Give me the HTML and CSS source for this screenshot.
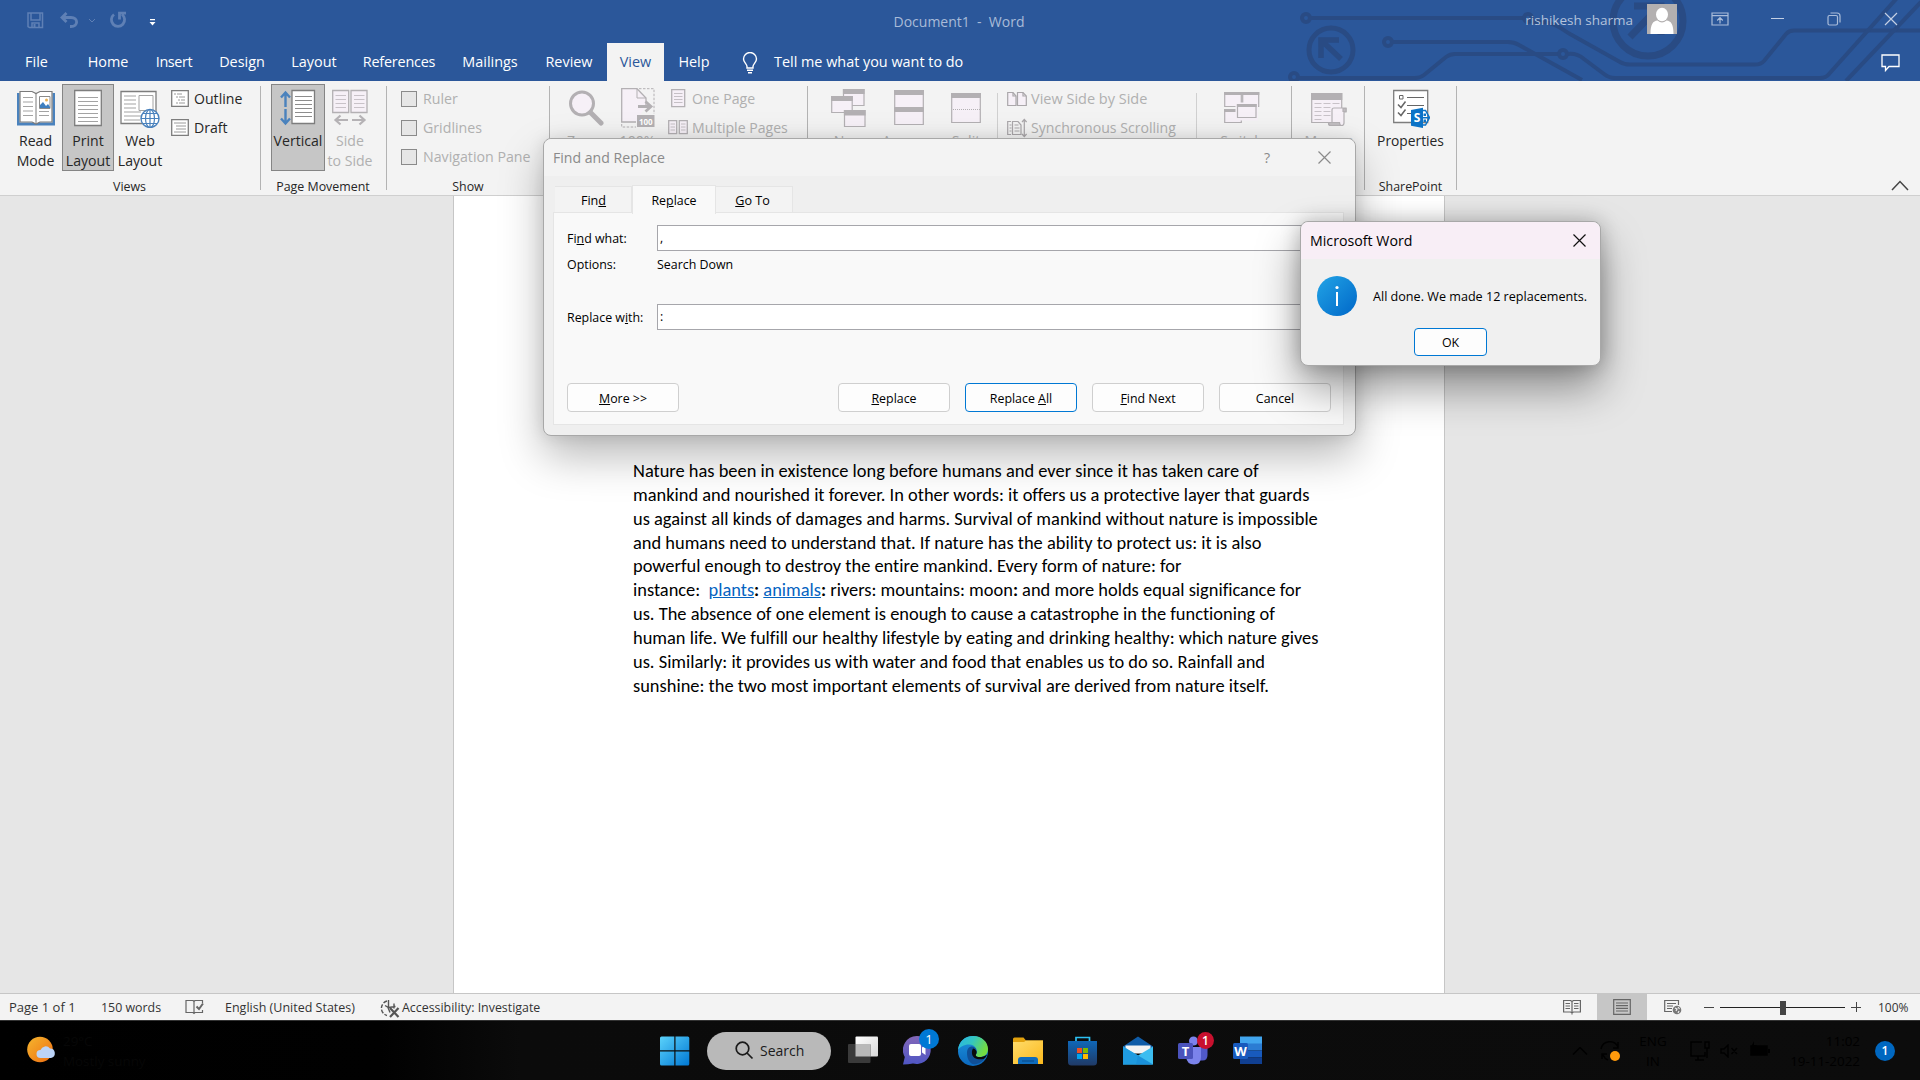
FILE: index.html
```html
<!DOCTYPE html>
<html lang="en">
<head>
<meta charset="utf-8">
<title>Document1 - Word</title>
<link rel="stylesheet" href="styles.css">
</head>
<body>
<header class="top">
  <svg class="circuit" width="640" height="81" viewBox="1280 0 640 81" fill="none" stroke="#294b84" stroke-width="4">
    <circle cx="1306" cy="18" r="4"/><path d="M1311 18H1523"/><circle cx="1528" cy="18" r="4"/>
    <path d="M1532 22C1552 20 1560 28 1570 34L1620 62Q1624 64.500 1630 64.500H1755Q1761 64.500 1764 61L1786 34Q1789 30.500 1794 30.500H1920"/>
    <circle cx="1388" cy="42" r="4"/><path d="M1393 42H1508Q1514 42 1519 45L1582 80"/>
    <circle cx="1294" cy="77" r="4"/><path d="M1299 78H1415Q1420 78 1424 75L1446 57Q1450 54 1455 54H1558"/>
    <circle cx="1563" cy="54" r="4"/><path d="M1568 54Q1577 53 1584 59L1604 74Q1609 78 1615 78H1820Q1826 78 1829 74L1897 -2"/>
    <path d="M1846 81L1921 2"/>
    <circle cx="1331" cy="50" r="22" stroke-width="5"/>
    <path d="M1341 59L1322 41M1321 58V40H1339" stroke-width="5.500"/>
    <circle cx="1648" cy="21" r="35" stroke-width="7"/>
    <path d="M1630 37L1658 8M1634 6H1661V35" stroke-width="7"/>
  </svg>
  <div class="titlebar">
    <div class="quick">
      <svg width="17" height="17" viewBox="0 0 17 17" fill="none" stroke="#5f80b5" stroke-width="1.500"><path d="M1 1h14.500v14.500H2.500L1 14.500zM4 1v7h9V1M5 15.500v-4.500h7v4.500"/><path d="M7.500 12v3.500" stroke-width="2"/></svg>
      <svg class="undo" width="19" height="17" viewBox="0 0 19 17" fill="none" stroke="#5f80b5" stroke-width="2.800"><path d="M6.500 1L2 5.500L6.500 10M2 5.500H11C18.500 5.500 18.500 14.500 11 14.500H10"/></svg>
      <svg class="more" width="8" height="6" viewBox="0 0 8 6" fill="none" stroke="#5f80b5"><path d="M1 1L4 4L7 1"/></svg>
      <svg class="redo" width="18" height="18" viewBox="0 0 18 18" fill="none" stroke="#5f80b5" stroke-width="2.800"><path d="M5 3.500A6.600 6.600 0 1 0 13 3.500M10.500 8.500V2.200H17"/></svg>
      <svg class="custom" width="7" height="7" viewBox="0 0 7 7" fill="#fff"><path d="M1 0h5v1.300H1zM0.500 3h6L3.500 6.500z"/></svg>
    </div>
    <div class="doc-title">Document1&nbsp; -&nbsp; Word</div>
    <div class="account">
      <span class="user">rishikesh sharma</span>
      <svg class="avatar" width="30" height="30" viewBox="0 0 30 30"><path fill="#b3b0b0" d="M0 0h30v30H0z"/><ellipse cx="15" cy="10.500" rx="6" ry="6.800" fill="#fff"/><path fill="#fff" d="M3.500 30C3.500 20 6 17 10.500 16.500Q15 20.500 19.500 16.500C24 17 26.500 20 26.500 30z"/></svg>
      <svg class="wi ropt" width="18" height="14" viewBox="0 0 18 14" fill="none" stroke="#aabcd9" stroke-width="1.200"><path d="M1 1h16v12H1zM1 3.700h16M9 11.500V6M6.200 8.500L9 5.700L11.800 8.500"/></svg>
      <svg class="wi min" width="13" height="14" viewBox="0 0 13 14" stroke="#c4d0e4"><path d="M0 6.500h13"/></svg>
      <svg class="wi rest" width="14" height="14" viewBox="0 0 14 14" fill="none" stroke="#aabcd9" stroke-width="1.200"><rect x="1" y="3.500" width="9.500" height="9.500" rx="1.500"/><path d="M3.500 1h6.500a3 3 0 0 1 3 3v6.500"/></svg>
      <svg class="wi cls" width="14" height="14" viewBox="0 0 14 14" stroke="#c4d0e4" stroke-width="1.200"><path d="M1 1l12 12M13 1L1 13"/></svg>
    </div>
  </div>
  <nav class="tabs">
    <span class="t-file">File</span><span class="t-home">Home</span><span class="t-ins">Insert</span><span class="t-des">Design</span><span class="t-lay">Layout</span><span class="t-ref">References</span><span class="t-mail">Mailings</span><span class="t-rev">Review</span><span class="t-view">View</span><span class="t-help">Help</span>
    <svg class="bulb" width="16" height="22" viewBox="0 0 16 22" fill="none" stroke="#fff" stroke-width="1.400"><path d="M5 16V14.500C5 12 1.500 10.500 1.500 7a6.300 6.300 0 0 1 13 0C14.500 10.500 11 12 11 14.500V16zM5 18.300h6M6 20.800h4"/></svg>
    <span class="tell">Tell me what you want to do</span>
    <svg class="comment" width="19" height="18" viewBox="0 0 19 18" fill="none" stroke="#fff" stroke-width="1.300"><path d="M1 1h17v11.500H8L4.500 16.500V12.500H1z"/></svg>
  </nav>
</header>

<section class="ribbon">
  <div class="group g-views">
    <div class="row">
      <div class="big b-read">
        <svg width="38" height="40" viewBox="0 0 38 40" fill="none"><path d="M1 5v31h36V5" stroke="#4a82bd" stroke-width="3"/><path d="M3 3.500h12l4 2 4-2h12v30.500H23l-4 2-4-2H3z" fill="#fff" stroke="#7a7a7a" stroke-width="1.200"/><path d="M19 5.500V35" stroke="#7a7a7a"/><path d="M6 9.500h10M6 14h10M6 18.500h10M6 23h10M6 27.500h10M22 23.500h10M22 27.500h10" stroke="#a3a3a3"/><path d="M22.500 8.500h10.500v12H22.500z" stroke="#8a8a8a"/><circle cx="29.500" cy="12" r="1.500" fill="#e8b054"/><path d="M23 20v-3l3-3 3 4 2-2 2 3v1z" fill="#3f7fbf"/></svg>
        <p>Read<br>Mode</p></div>
      <div class="big b-print on">
        <svg width="28" height="40" viewBox="0 0 28 40" fill="none"><path d="M.7 2.500h26.600v35H.7z" fill="#fff" stroke="#7d7d7d" stroke-width="1.300"/><path d="M4 9.500h20M4 13.500h20M4 17.500h20M4 21.500h20M4 25.500h20M4 29.500h20M4 33.500h20" stroke="#a3a3a3"/></svg>
        <p>Print<br>Layout</p></div>
      <div class="big b-web">
        <svg width="40" height="40" viewBox="0 0 40 40" fill="none"><path d="M1 3.500h35v32H1z" fill="#fff" stroke="#7d7d7d" stroke-width="1.300"/><path d="M4 8h12M4 12h12M4 16h12M4 20h12M4 24h17M4 28h17M4 32h16" stroke="#a3a3a3"/><path d="M19 7.500h14v15H19z" fill="#fff" stroke="#a3a3a3"/><circle cx="30" cy="30.500" r="9" fill="#fff" stroke="#4a82bd" stroke-width="1.400"/><ellipse cx="30" cy="30.500" rx="4.500" ry="9" stroke="#4a82bd" stroke-width="1.200"/><path d="M30 21.500v18M21 30.500h18M23 25.500h14M23 35.500h14" stroke="#4a82bd" stroke-width="1.200"/></svg>
        <p>Web<br>Layout</p></div>
      <div class="small s-views">
        <div><svg width="18" height="17" viewBox="0 0 18 17" fill="none"><path d="M.7.700h16.600v15.600H.7z" fill="#fff" stroke="#7d7d7d" stroke-width="1.300"/><path d="M3 4h2M6 4h5M5 7h2M8 7h6M7 10h2M10 10h4M5 13h2M8 13h6" stroke="#9a9a9a"/></svg>Outline</div>
        <div><svg width="18" height="17" viewBox="0 0 18 17" fill="none"><path d="M.7.700h16.600v15.600H.7z" fill="#fff" stroke="#7d7d7d" stroke-width="1.300"/><path d="M3 4h12M5 7h10M5 10h10M3 13h12" stroke="#9a9a9a"/></svg>Draft</div>
      </div>
    </div>
    <div class="label">Views</div>
  </div>
  <div class="group g-move">
    <div class="row">
      <div class="big b-vert on">
        <svg width="36" height="40" viewBox="0 0 36 40" fill="none"><path d="M5.500 19V5M1 9.500L5.500 4.500L10 9.500M5.500 21V35M1 30.500L5.500 35.500L10 30.500" stroke="#4a82bd" stroke-width="2.400"/><path d="M12 2.500h22.500v33H12z" fill="#fff" stroke="#7d7d7d" stroke-width="1.300"/><path d="M15 8.500h17M15 12.500h17M15 16.500h17M15 20.500h17M15 24.500h17M15 28.500h17" stroke="#8d8d8d"/></svg>
        <p>Vertical</p></div>
      <div class="big b-side off">
        <svg width="36" height="40" viewBox="0 0 36 40" fill="none"><path d="M.7 2.500h16v22H.7zM19 2.500h16v22H19z" fill="#f6f0f7" stroke="#b3b0b3" stroke-width="1.300"/><path d="M3.500 7.500h10.500M3.500 11.500h10.500M3.500 15.500h10.500M3.500 19.500h10.500M22 7.500h10.500M22 11.500h10.500M22 15.500h10.500M22 19.500h10.500" stroke="#c8c2c8"/><path d="M16 32H4M8.500 27.500L3.500 32L8.500 36.500M20 32H32M27.500 27.500L32.500 32L27.500 36.500" stroke="#b5b2b5" stroke-width="2.200"/></svg>
        <p>Side<br>to Side</p></div>
    </div>
    <div class="label">Page Movement</div>
  </div>
  <div class="group g-show">
    <div class="row">
      <div class="small off s-show">
        <div><i class="check"></i>Ruler</div>
        <div><i class="check"></i>Gridlines</div>
        <div><i class="check"></i>Navigation Pane</div>
      </div>
    </div>
    <div class="label">Show</div>
  </div>
  <div class="group g-zoom">
    <div class="row off">
      <div class="big b-zoom">
        <svg width="36" height="40" viewBox="0 0 36 40" fill="none"><circle cx="14" cy="15.500" r="11.500" fill="#f6f0f7" stroke="#b3b0b3" stroke-width="3"/><path d="M22.500 24.500L33 35" stroke="#b3b0b3" stroke-width="5" stroke-linecap="round"/></svg>
        <p>Zoom</p></div>
      <div class="big b-full">
        <svg width="34" height="40" viewBox="0 0 34 40" fill="none"><path d="M15 34H.7V.700H16L25 10v8" fill="#f6f0f7" stroke="#b3b0b3" stroke-width="1.300"/><path d="M16 .7V10h9" stroke="#b3b0b3"/><path d="M18 .7h15V26M.7 36v3H15" stroke="#b3b0b3" stroke-dasharray="2.500 1.500"/><path d="M17 18.500H29M24.500 13.500L30 18.500L24.500 23.500" stroke="#b3b0b3" stroke-width="2.800"/><path d="M16 27h17.500v12H16z" fill="#b3b0b3"/><text x="24.800" y="36.500" class="hundred">100</text></svg>
        <p>100%</p></div>
      <div class="small s-pages">
        <div><svg width="20" height="19" viewBox="0 0 20 19" fill="none"><path d="M3.700.700h13v17h-13z" fill="#f6f0f7" stroke="#b3b0b3" stroke-width="1.300"/><path d="M6 4.500h8.500M6 7.500h8.500M6 10.500h8.500M6 13.500h8.500" stroke="#c5c0c5"/></svg>One Page</div>
        <div><svg width="20" height="15" viewBox="0 0 20 15" fill="none"><path d="M.7.700h8v13h-8zM11.300.700h8v13h-8z" fill="#f6f0f7" stroke="#b3b0b3" stroke-width="1.300"/><path d="M2.500 4h4.500M2.500 7h4.500M2.500 10h4.500M13 4h4.500M13 7h4.500M13 10h4.500" stroke="#c5c0c5"/></svg>Multiple Pages</div>
      </div>
    </div>
  </div>
  <div class="group g-window">
    <div class="row off">
      <div class="big b-new">
        <svg width="35" height="40" viewBox="0 0 35 40" fill="#f6f0f7" stroke="#b3b0b3" stroke-width="1.200"><path d="M12.500 1.500H33v16H12.500z"/><path d="M12.500 1.500H33v4H12.500z" fill="#b3b0b3"/><path d="M.7 8.500h20.500v16H.7z"/><path d="M.7 8.500h20.500v4H.7z" fill="#b3b0b3"/><path d="M13.500 22.500H34v16H13.500z"/><path d="M13.500 22.500H34v4.500H13.500z" fill="#b3b0b3"/></svg>
        <p>New</p></div>
      <div class="big b-arr">
        <svg width="30" height="40" viewBox="0 0 30 40" fill="#f6f0f7" stroke="#b3b0b3" stroke-width="1.200"><path d="M.7 2.500h28.600v34H.7z"/><path d="M.7 2.500h28.600v4H.7zM.7 19.500h28.600v4H.7z" fill="#b3b0b3"/></svg>
        <p>Arrange</p></div>
      <div class="big b-split">
        <svg width="30" height="40" viewBox="0 0 30 40" fill="#f6f0f7" stroke="#b3b0b3" stroke-width="1.200"><path d="M.7 5.500h28.600v29H.7z"/><path d="M.7 5.500h28.600v4H.7z" fill="#b3b0b3"/><path d="M2 21.500h27" stroke-dasharray="1 1"/></svg>
        <p>Split</p></div>
      <i class="divider"></i>
      <div class="small s-side">
        <div class="vss"><svg width="20" height="16" viewBox="0 0 20 16" fill="#f6f0f7" stroke="#aaa7aa" stroke-width="1.200"><path d="M.7 1.500H6L9 5v9.500H.7zM10.500 1.500H16L19.300 5v9.500h-8.800z"/><path d="M6 1.500V5h3M16 1.500V5h3" fill="none"/></svg>View Side by Side</div>
        <div><svg width="20" height="20" viewBox="0 0 20 20" fill="none" stroke="#aaa7aa" stroke-width="1.200"><path d="M4 3.500H.7v13H4M5.500 3.500H11L14 7v9.500H5.500z"/><path d="M2.500 7h2M2.500 10h2M2.500 13h2M7.500 7h4M7.500 10h5M7.500 13h5"/><path d="M17.300 2v16M15 4l2.300-2.500L19.600 4M15 16l2.300 2.500L19.600 16"/></svg>Synchronous Scrolling</div>
      </div>
      <i class="divider d2"></i>
      <div class="big b-switch">
        <svg width="36" height="40" viewBox="0 0 36 40" fill="#f6f0f7" stroke="#b3b0b3" stroke-width="1.200"><path d="M.7 4.500h16.600v14H.7zM18.700 4.500h16v14h-16zM.7 21.500h16.600v13H.7z"/><path d="M.7 4.500h16.600v2H.7zM18.700 4.500h16v2h-16zM.7 21.500h16.600v2H.7z" fill="#b3b0b3"/><path d="M13.500 16.500H32v14H13.500z" stroke="#f6f0f7" stroke-width="4"/><path d="M13.500 16.500H32v13H13.500z"/><path d="M13.500 16.500H32v2H13.500z" fill="#b3b0b3"/></svg>
        <p>Switch</p></div>
    </div>
  </div>
  <div class="group g-macros">
    <div class="row off">
      <div class="big b-mac">
        <svg width="36" height="40" viewBox="0 0 36 40" fill="#f6f0f7" stroke="#b3b0b3" stroke-width="1.200"><path d="M.7 5.500h30v29H.7z"/><path d="M.7 5.500h30v6H.7z" fill="#b3b0b3"/><path d="M3.500 15.500h7M12.500 15.500h7M21.500 15.500h7M3.500 19.500h7M12.500 19.500h7M3.500 23.500h7M12.500 23.500h7M3.500 27.500h7M12.500 27.500h7M3.500 31.500h7" stroke="#c8c2c8"/><path d="M21 35V22q0-2 2-2h12v4h-2v11q0 2.500-2.500 2.500H19.500q-2 0-2-2.500H29"/><path d="M17.500 34.500h11q0 3 2 3H19.500q-2 0-2-3zM32 20.500h3v3h-3z" fill="#c0bdc0"/></svg>
        <p>Macros</p></div>
    </div>
  </div>
  <div class="group g-share">
    <div class="row">
      <div class="big b-prop">
        <svg width="38" height="40" viewBox="0 0 38 40" fill="none"><path d="M1.700 2.500h34v32h-34z" fill="#fff" stroke="#7d7d7d" stroke-width="1.300"/><path d="M7.500 7.500h3.500v3.500H7.500zM15 9.500h17M15 17.500h17M15 25.500h10" stroke="#666"/><path d="M6 16.500l3 3 4.500-6M6 24.500l3 3 4.500-6" stroke="#666" stroke-width="1.500"/><path d="M19 22l12-2.200v20.200l-12-2.200z" fill="#0b73c7"/><path d="M31 22.500h2.500l4 7.200-4 7.300H31M31 29.700h6" stroke="#0b73c7" stroke-width="1.500"/><path d="M31.500 25.500h2.500v2.500h-2.500zM31.500 31.500h2.500v2.500h-2.500z" fill="#0b73c7"/><text x="25" y="34.300" class="sp">S</text></svg>
        <p>Properties</p></div>
    </div>
    <div class="label">SharePoint</div>
  </div>
  <svg class="collapse" width="18" height="11" viewBox="0 0 18 11" fill="none" stroke="#444" stroke-width="1.500"><path d="M1 10l8-8.500L17 10"/></svg>
</section>

<main class="canvas">
  <article class="page">
    <p>Nature has been in existence long before humans and ever since it has taken care of<br>
    mankind and nourished it forever. In other words: it offers us a protective layer that guards<br>
    us against all kinds of damages and harms. Survival of mankind without nature is impossible<br>
    and humans need to understand that. If nature has the ability to protect us: it is also<br>
    powerful enough to destroy the entire mankind. Every form of nature: for<br>
    instance:&nbsp; <a>plants</a><b>:</b> <a>animals</a><b>:</b> rivers: mountains: moon<b>:</b> and more holds equal significance for<br>
    us. The absence of one element is enough to cause a catastrophe in the functioning of<br>
    human life. We fulfill our healthy lifestyle by eating and drinking healthy: which nature gives<br>
    us. Similarly: it provides us with water and food that enables us to do so. Rainfall and<br>
    sunshine: the two most important elements of survival are derived from nature itself.</p>
  </article>
</main>

<footer class="status">
  <span class="st-page">Page 1 of 1</span><span class="st-words">150 words</span>
  <svg class="proof" width="19" height="16" viewBox="0 0 19 16" fill="none" stroke="#666" stroke-width="1.200"><path d="M9 2.500L8 1.500H1v12h7l1 1 1-1h7.500V11M9 2.500v12M9 2.500l1-1h7.500V4"/><path d="M11.500 7.500l2.500 2.500 4-5.500" stroke-width="2"/></svg>
  <span class="st-lang">English (United States)</span>
  <svg class="acc" width="20" height="19" viewBox="0 0 20 19" fill="none" stroke="#555" stroke-width="1.400"><path d="M7 2A7.500 7.500 0 0 0 7 16.500" stroke-dasharray="4 1.500"/><path d="M8.500 1v7M5 6.500l3.500 2 7-1M14 4.500v5M8 8.500l2 5"/><path d="M10 9l8.500 9M18.500 9L10 18" stroke-width="2.200"/></svg>
  <span class="st-acc">Accessibility: Investigate</span>
  <div class="status-right">
    <svg class="v-read" width="18" height="16" viewBox="0 0 18 16" fill="none" stroke="#666"><path d="M.6 1.500h7l1.400 1 1.400-1h7v11.500h-7l-1.400 1-1.400-1h-7zM9 2.500v13M2.500 4.500h4.500M2.500 7h4.500M2.500 9.500h4.500M11 4.500h4.500M11 7h4.500M11 9.500h4.500" stroke-width="1.200"/></svg>
    <div class="v-print"><svg width="18" height="16" viewBox="0 0 18 16" fill="none" stroke="#666" stroke-width="1.200"><path d="M.7.700h16.600v14.600H.7zM3 4h12M3 6.700h12M3 9.400h12M3 12h12"/></svg></div>
    <svg class="v-web" width="18" height="16" viewBox="0 0 18 16" fill="none" stroke="#666" stroke-width="1.200"><path d="M8 12.500H.7V1.500h13.800V6M3 4.500h9M3 7h6M3 9.500h5"/><circle cx="13" cy="11" r="4.300" fill="#777" stroke="none"/><path d="M11 9l2 1-1 2M14 8l1.500 2M14 14l1-2" stroke="#eee"/></svg>
    <i class="z-minus"></i><div class="slider"><i></i></div>
    <svg class="z-plus" width="10" height="10" viewBox="0 0 10 10" stroke="#444"><path d="M0 5.500h10M5.500 0v10"/></svg>
    <span class="st-zoom">100%</span>
  </div>
</footer>

<footer class="taskbar">
  <div class="weather">
    <svg width="30" height="28" viewBox="0 0 30 28"><defs><linearGradient id="sun" x1="0" y1="0" x2="1" y2="1"><stop offset="0" stop-color="#f5b62e"/><stop offset="1" stop-color="#ee6d12"/></linearGradient></defs><circle cx="13" cy="13.500" r="12.800" fill="url(#sun)"/><path d="M13.500 22a4 4 0 0 1 0-8 5.500 5.500 0 0 1 9.500-1.500 4.800 4.800 0 0 1 1 9.500z" fill="#bcd4f8"/></svg>
    <p>29°C<br>Mostly sunny</p>
  </div>
  <svg class="start" width="30" height="30" viewBox="0 0 30 30"><defs><linearGradient id="win" x1="0" y1="0" x2="1" y2="1"><stop offset="0" stop-color="#5bd2fb"/><stop offset="1" stop-color="#0078d4"/></linearGradient></defs><path fill="url(#win)" d="M1.500.500h12.800v13.800H0V2Q0 .5 1.500.5zM15.500.500h12.300q1.500 0 1.500 1.500v12.300H15.500zM0 15.500h14.300v14H1.500Q0 29.500 0 28zM15.500 15.500h13.800V28q0 1.500-1.500 1.500H15.500z"/></svg>
  <div class="search"><svg width="19" height="19" viewBox="0 0 19 19" fill="none" stroke="#1b1b1b" stroke-width="1.700"><circle cx="7.500" cy="7.500" r="6.300"/><path d="M12 12l5.500 5.500"/></svg>Search</div>
  <div class="apps">
    <svg width="30" height="30" viewBox="0 0 30 30"><defs><linearGradient id="tv" x1="0" y1="0" x2="1" y2="1"><stop offset="0" stop-color="#fff"/><stop offset="1" stop-color="#d8d8d8"/></linearGradient></defs><rect x="7.500" y=".5" width="22.500" height="20" rx="1" fill="url(#tv)"/><rect x="0" y="8" width="22.500" height="19" rx="1" fill="#3a3a3a"/><path d="M7.500 8h15v12.500h-15z" fill="#b9b9b9"/></svg>
    <div class="badged"><svg width="30" height="30" viewBox="0 0 30 30"><defs><linearGradient id="chat" x1="0" y1="0" x2="0" y2="1"><stop offset="0" stop-color="#8367b8"/><stop offset="1" stop-color="#4f56c4"/></linearGradient></defs><path fill="url(#chat)" d="M14 0a14 14 0 1 1-4 27.500Q5 28.500 0 28.500L1.800 21A14 14 0 0 1 14 0z"/><rect x="6" y="8" width="12" height="12" rx="2" fill="#fff"/><path fill="#fff" d="M19 11.500l3.500-2.500v10L19 16.500z"/></svg><b class="badge blue">1</b></div>
    <svg width="30" height="30" viewBox="0 0 30 30"><defs><linearGradient id="e1" x1="0" y1="0" x2="1" y2=".4"><stop offset="0" stop-color="#28b3e8"/><stop offset=".5" stop-color="#34c6c0"/><stop offset="1" stop-color="#73dc42"/></linearGradient><linearGradient id="e2" x1="0" y1="0" x2="0" y2="1"><stop offset="0" stop-color="#1d93dc"/><stop offset="1" stop-color="#0b68be"/></linearGradient></defs><circle cx="15" cy="15" r="15" fill="url(#e2)"/><path d="M9 17C9 9 17 9 18.500 14C20 17.500 17 18 18 20C20 22 26 21.500 29 18.500C26 26 20 29 14.500 28C11 26 9 22 9 17z" fill="#104f97"/><path d="M0 14C1 5 7 0 15 0C24 0 30 6 30 13C30 19 25.500 21 21.500 21C17 21 17.500 18.500 18.500 17.500C20 15 18 8.500 11 8.500C6 8.500 1.500 11 0 14z" fill="url(#e1)"/><path d="M15 12.500a4 4 0 0 1 3.500 5c-1 1-1.500 3.500 3 3.500 2.500 0 5-.5 7.500-2.500-1 3-2 3.500-3.500 4.500-6 1-11-.5-11.500-5.500-.2-2 0-3.500 1-5z" fill="#0a0a0a"/></svg>
    <svg width="30" height="30" viewBox="0 0 30 30"><defs><linearGradient id="fold" x1="0" y1="0" x2="1" y2="1"><stop offset="0" stop-color="#ffdc6b"/><stop offset="1" stop-color="#fbb91d"/></linearGradient></defs><path fill="#e2a10d" d="M0 3q0-1.500 1.500-1.500h9L13 4.500h17V14H0z"/><path fill="url(#fold)" d="M0 6h11l2-1.500h17V28H0z"/><path fill="#0f6cbd" d="M5 28v-4q0-3 3-3h14q3 0 3 3v4z"/><path d="M9 25h12" stroke="#0b4f90" stroke-width="1.300"/></svg>
    <svg width="30" height="30" viewBox="0 0 30 30"><defs><linearGradient id="st" x1="0" y1="0" x2="0" y2="1"><stop offset="0" stop-color="#0f67b8"/><stop offset="1" stop-color="#203a66"/></linearGradient></defs><path d="M8 6V1.500h13.500V6" fill="none" stroke="#2cc0f2" stroke-width="1.700"/><path fill="url(#st)" d="M0 5h29v21q0 3.500-3.500 3.500h-22Q0 29.500 0 26z"/><path fill="#f25022" d="M9 12h5v5H9z"/><path fill="#7fba00" d="M15 12h5v5h-5z"/><path fill="#00a4ef" d="M9 18h5v5H9z"/><path fill="#ffb900" d="M15 18h5v5h-5z"/></svg>
    <svg width="30" height="30" viewBox="0 0 30 30"><path fill="#0f5ca8" d="M0 10.500L15 .500l15 10v5H0z"/><path fill="#f3f3f3" d="M2.500 9.500h25v8h-25z"/><path fill="#3cbdf0" d="M0 10.500L15 19.500 30 10.500v18H0z"/><path fill="#1f9be0" d="M0 10.500l30 18H0z"/><path fill="#1583d1" d="M15 19.500L30 28.500H13z" opacity=".4"/></svg>
    <div class="badged"><svg width="30" height="30" viewBox="0 0 30 30"><circle cx="15.500" cy="5" r="4.500" fill="#7b83eb"/><path fill="#5059c9" d="M20 11h9.500v8q0 5.500-5 5.500h-4z"/><path fill="#7b83eb" d="M8 11h15v10q0 7.500-7 7.500T8 21z"/><rect y="7" width="15" height="16" rx="1.500" fill="#4b53bc"/><text x="7.500" y="20" class="ltr">T</text></svg><b class="badge red">1</b></div>
    <svg width="30" height="30" viewBox="0 0 30 30"><path fill="#41a5ee" d="M7 .5h22V8H7z"/><path fill="#2b7cd3" d="M7 7.500h22v7H7z"/><path fill="#185abd" d="M7 14.500h22v7H7z"/><path fill="#103f91" d="M7 21.500h22V28H7z"/><rect y="7" width="15" height="16" rx="1.500" fill="#185abd"/><text x="7.500" y="20" class="ltr">W</text></svg>
  </div>
  <div class="tray">
    <svg width="16" height="8" viewBox="0 0 16 8" fill="none" stroke="#000" stroke-width="1.500"><path d="M1 7.500l7-7 7 7"/></svg>
    <svg class="sync" width="20" height="20" viewBox="0 0 20 20" fill="none" stroke="#000" stroke-width="1.500"><path d="M1 8A9 9 0 0 1 18 6M18 1v6h-5M2 18v-5h5M3 14a9 9 0 0 0 5 5"/><circle cx="15" cy="15" r="5" fill="#ff9a0c" stroke="none"/></svg>
    <p class="lang">ENG<br>IN</p>
    <svg class="mon" width="20" height="20" viewBox="0 0 20 20" fill="none" stroke="#000" stroke-width="1.500"><path d="M12 1H1v14h14v-4M5 19h9M8 15v4M15 1h4v6h-4zM17 7v10"/></svg>
    <svg class="spk" width="18" height="14" viewBox="0 0 18 14" fill="none" stroke="#000" stroke-width="1.400"><path d="M1 5h3l4-4v12l-4-4H1zM11.500 4l5.500 6M17 4l-5.500 6"/></svg>
    <svg class="bat" width="20" height="16" viewBox="0 0 20 16"><path d="M1 5h16v9H1z" fill="#000" stroke="#000" stroke-width="1.500"/><path d="M18 8h2v4h-2zM4 0L1 6h3l-1 4 4-6H4z"/></svg>
    <p class="clock">11:02<br>19-11-2022</p>
    <b class="note">1</b>
  </div>
</footer>

<div class="dialog find">
  <div class="dlg-title"><span>Find and Replace</span><span class="q">?</span><svg width="13" height="13" viewBox="0 0 13 13" stroke="#8a8a8a" stroke-width="1.200"><path d="M.5.500l12 12M12.500.500l-12 12"/></svg></div>
  <div class="dlg-tabs"><span class="side-tab first">Fin<u>d</u></span><span class="cur-tab">Re<u>p</u>lace</span><span class="side-tab"><u>G</u>o To</span></div>
  <div class="panel">
    <div class="field"><label>Fi<u>n</u>d what:</label><div class="input">,</div></div>
    <div class="field opts"><label>Options:</label><span>Search Down</span></div>
    <div class="field with"><label>Replace w<u>i</u>th:</label><div class="input">:</div></div>
    <div class="buttons"><span class="btn"><u>M</u>ore &gt;&gt;</span><span class="btn push"><u>R</u>eplace</span><span class="btn def">Replace <u>A</u>ll</span><span class="btn"><u>F</u>ind Next</span><span class="btn">Cancel</span></div>
  </div>
</div>

<div class="dialog msg">
  <div class="msg-title"><span>Microsoft Word</span><svg width="13" height="13" viewBox="0 0 13 13" stroke="#111" stroke-width="1.200"><path d="M.5.500l12 12M12.500.500l-12 12"/></svg></div>
  <div class="msg-body"><svg width="40" height="40" viewBox="0 0 40 40"><defs><linearGradient id="inf" x1="0" y1="0" x2="1" y2="1"><stop offset="0" stop-color="#22a4e6"/><stop offset="1" stop-color="#0067c8"/></linearGradient></defs><circle cx="20" cy="20" r="20" fill="url(#inf)"/><circle cx="20" cy="11.500" r="1.600" fill="#fff"/><path d="M20 16v14" stroke="#fff" stroke-width="2"/></svg><span>All done. We made 12 replacements.</span></div>
  <span class="btn def ok">OK</span>
</div>
</body>
</html>
```
FILE: styles.css
```css
* { box-sizing: border-box; }
body { margin: 0; width: 1920px; height: 1080px; overflow: hidden; position: relative; display: flex; flex-direction: column; font-family: "Open Sans", "Noto Sans", sans-serif; font-size: 14.1px; color: #262626; }
p { margin: 0; }
svg { display: block; flex: none; }
span { white-space: nowrap; }

/* title bar and tabs */
.top { position: relative; height: 81px; background: #2b579a; flex: none; }
.circuit { position: absolute; right: 0; top: 0; }
.titlebar { position: relative; height: 43px; display: flex; }
.quick { width: 660px; display: flex; padding: 12px 0 0 27px; }
.undo { margin-left: 16px; }
.more { margin: 6px 0 0 9px; }
.redo { margin: -1px 0 0 13px; }
.custom { margin: 7px 0 0 22px; }
.doc-title { width: 600px; padding-right: 2px; text-align: center; line-height: 44px; color: #a9bbd8; font-size: 14px; }
.account { flex: 1; display: flex; justify-content: flex-end; padding-right: 22px; }
.user { line-height: 40px; font-size: 13.5px; color: #b4c3dc; margin-right: 14px; }
.avatar { margin-top: 4px; }
.wi { margin-top: 12px; }
.ropt { margin-left: 34px; }
.min { margin-left: 42px; }
.rest { margin-left: 43px; }
.cls { margin-left: 43px; }
.tabs { position: relative; height: 38px; display: flex; color: #fff; font-size: 14.4px; }
.tabs span { text-align: center; line-height: 38px; }
.t-file { width: 73px; }
.t-home { width: 70px; }
.t-ins { width: 62px; letter-spacing: -.4px; }
.t-des { width: 74px; }
.t-lay { width: 70px; }
.t-ref { width: 100px; letter-spacing: -.2px; }
.t-mail { width: 82px; }
.t-rev { width: 76px; }
.t-view { width: 57px; background: #f3f3f3; color: #2b579a; }
.t-help { width: 60px; }
.bulb { margin: 9px 0 0 18px; }
.tabs .tell { margin-left: 16px; }
.comment { margin: 11px 20px 0 auto; }

/* ribbon */
.ribbon { height: 115px; flex: none; background: #f3f3f3; border-bottom: 1px solid #cfcfcf; display: flex; padding-top: 3px; position: relative; }
.group { position: relative; display: flex; flex-direction: column; height: 111px; flex: none; }
.group::after { content: ""; position: absolute; right: 0; top: 2px; width: 1px; height: 104px; background: #b3b3b3; }
.row { display: flex; height: 90px; }
.label { text-align: center; font-size: 12.4px; line-height: 25px; height: 21px; }
.g-views { width: 261px; padding-left: 9px; }
.g-views .label { padding-right: 11px; }
.g-move { width: 126px; padding-left: 10px; }
.g-move .label { padding-right: 12px; }
.g-show { width: 163px; padding-left: 14px; }
.g-show .label { padding-right: 15px; }
.g-zoom { width: 258px; padding-left: 13px; }
.g-window { width: 484px; padding-left: 12px; }
.g-macros { width: 73px; }
.g-share { width: 92px; }
.g-share .label { padding-right: 1px; }
.big { height: 87px; display: flex; flex-direction: column; align-items: center; padding-top: 4px; flex: none; }
.big p { margin-top: 3px; line-height: 20px; text-align: center; white-space: nowrap; }
.big.on { background: #c6c6c6; border: 1px solid #858585; padding-top: 3px; }
.off, .off p { color: #b0b0b0; }
.b-read { width: 53px; }
.b-print { width: 52px; }
.b-web { width: 52px; }
.b-vert { width: 54px; }
.b-side { width: 50px; }
.b-zoom { width: 46px; }
.b-full { width: 57px; }
.b-new { width: 57px; }
.b-arr { width: 63px; }
.b-split { width: 52px; }
.b-switch { width: 57px; margin-left: 16px; }
.b-mac { width: 73px; }
.b-prop { width: 91px; font-size: 13.8px; }
.small { display: flex; flex-direction: column; white-space: nowrap; }
.small div { height: 29px; display: flex; align-items: center; }
.small svg { margin-right: 4px; }
.s-views { padding-left: 5px; }
.s-views svg { margin-right: 5px; }
.s-pages { padding-left: 2px; }
.check { width: 16px; height: 16px; border: 1px solid #8a8a8a; background: #e6e6e6; margin-right: 6px; }
.s-show div { font-size: 14.2px; }
.s-side { padding-left: 9px; width: 198px; }
.vss { font-size: 14.5px; }
.divider { width: 1px; height: 80px; background: #d0d0d0; margin: 9px 0 0 5px; }
.d2 { margin-left: 0; }
.hundred { font: bold 8px "Open Sans", sans-serif; fill: #fff; text-anchor: middle; }
.sp { font: bold 12px "Open Sans", sans-serif; fill: #fff; text-anchor: middle; }
.collapse { margin: 96px 11px 0 auto; }

/* document */
.canvas { flex: 1; background: #e6e6e6; padding-left: 453px; min-height: 0; }
.page { width: 992px; height: 100%; background: #fff; border: solid #c6c6c6; border-width: 0 1px; padding: 263px 0 0 179px; font-family: Carlito, Calibri, Lato, sans-serif; font-size: 18.42px; font-variant-ligatures: none; line-height: 23.85px; color: #000; white-space: nowrap; }
.page a { color: #0563c1; text-decoration: underline; }
.page b { font-weight: 700; }

/* status bar */
.status { height: 27px; flex: none; background: #f3f3f3; border-top: 1px solid #c6c6c6; display: flex; align-items: center; font-size: 12.4px; color: #333; padding-left: 9px; }
.st-page { width: 92px; font-size: 13px; }
.st-words { width: 84px; }
.st-lang { margin-left: 21px; width: 155px; font-size: 12.5px; }
.acc { margin-top: 3px; }
.st-acc { margin-left: 2px; }
.status-right { margin-left: auto; display: flex; align-items: center; height: 26px; }
.v-print { margin-left: 16px; width: 50px; height: 26px; background: #c6c6c6; display: flex; align-items: center; justify-content: center; }
.v-web { margin-left: 17px; }
.z-minus { width: 10px; height: 1px; background: #444; margin-left: 22px; }
.slider { width: 125px; height: 1px; background: #222; margin: 1px 0 0 6px; display: flex; align-items: center; justify-content: center; }
.slider i { width: 6px; height: 14px; background: #444; flex: none; }
.z-plus { margin-left: 6px; }
.st-zoom { width: 59px; padding-left: 17px; font-size: 12px; }

/* taskbar */
.taskbar { height: 60px; flex: none; background: linear-gradient(90deg, #000 0, #010101 380px, #0b0b0b 520px, #0c0c0c 100%); border-top: 1px solid #333; display: flex; align-items: center; }
.weather { width: 660px; display: flex; align-items: center; padding-left: 27px; color: #070707; font-size: 13.4px; line-height: 20px; }
.weather svg { margin-top: -2px; }
.weather p { margin-left: 6px; }
.search { margin: 0 17px; width: 124px; height: 38px; border-radius: 19px; background: #b9b9b9; display: flex; align-items: center; padding-left: 28px; gap: 6px; font-size: 14px; color: #1b1b1b; }
.apps { display: flex; gap: 25px; }
.badged { position: relative; }
.badge { position: absolute; border-radius: 50%; color: #fff; font-weight: 400; text-align: center; }
.blue { left: 16px; top: -7px; width: 20px; height: 20px; line-height: 20px; background: #0078d4; font-size: 13px; }
.red { left: 19px; top: -4px; width: 17px; height: 17px; line-height: 17px; background: #c8102e; font-size: 12px; font-weight: 600; }
.ltr { font: bold 13px "Open Sans", sans-serif; fill: #fff; text-anchor: middle; }
.tray { margin-left: auto; display: flex; align-items: center; padding-right: 25px; font-size: 13.4px; line-height: 20px; color: #000; }
.sync { margin-left: 12px; }
.lang { width: 32px; margin-left: 17px; text-align: center; }
.mon { margin-left: 21px; }
.spk { margin-left: 10px; }
.bat { margin: -4px 0 0 12px; }
.clock { width: 90px; text-align: right; }
.note { width: 20px; height: 20px; border-radius: 50%; background: #0067c0; color: #fff; text-align: center; margin-left: 15px; font-size: 12px; font-weight: 600; }

/* dialogs */
.dialog { position: absolute; border-radius: 8px; border: 1px solid #a8a8a8; font-size: 12.4px; color: #000; background: #efefef; }
.find { left: 543px; top: 138px; width: 813px; height: 298px; box-shadow: 0 20px 44px rgba(0,0,0,.28), 0 0 16px rgba(0,0,0,.1); padding: 0 11px 0 9px; }
.dlg-title { height: 37px; margin: 0 -11px 0 -9px; background: #f3f3f3; border-radius: 8px 8px 0 0; display: flex; align-items: center; padding: 0 24px 0 9px; font-size: 14.1px; color: #8a8a8a; }
.dlg-title .q { margin: 0 48px 0 auto; }
.dlg-tabs { display: flex; align-items: flex-end; height: 37px; }
.side-tab { width: 77px; height: 26px; background: #f3f3f3; border: 1px solid #e5e5e5; border-width: 1px 1px 0 0; line-height: 28px; text-align: center; margin-bottom: 1px; padding-right: 3px; font-size: 12.6px; }
.first { margin-left: 2px; padding-left: 1px; padding-right: 0; }
.cur-tab { width: 84px; height: 29px; background: #f9f9f9; border: 1px solid #e5e5e5; border-bottom: 0; line-height: 29px; text-align: center; margin-bottom: -1px; position: relative; }
.panel { height: 213px; background: #f9f9f9; border: 1px solid #e5e5e5; padding: 12px 12px 0 13px; margin-top: -1px; }
.field { display: flex; align-items: center; height: 26px; }
.field label { width: 90px; }
.input { flex: 1; height: 26px; background: #fff; border: 1px solid #a6a6ab; padding-left: 2px; line-height: 23px; }
.opts { margin-bottom: 27px; }
.buttons { display: flex; gap: 15px; margin-top: 53px; }
.btn { width: 112px; height: 29px; border: 1px solid #cfcfcf; border-radius: 4px; background: #fdfdfd; display: flex; align-items: center; justify-content: center; white-space: pre; padding-top: 1px; }
.push { margin-left: auto; }
.def { border-color: #0078d4; }
.msg { left: 1300px; top: 221px; width: 301px; height: 145px; background: #f0f0f0; box-shadow: 0 22px 44px rgba(0,0,0,.4), 0 0 20px rgba(0,0,0,.22); }
.msg-title { height: 37px; background: #f8eef6; border-radius: 8px 8px 0 0; display: flex; align-items: center; justify-content: space-between; padding: 0 14px 0 9px; font-size: 14.2px; }
.msg-body { display: flex; align-items: center; padding: 17px 0 0 16px; gap: 16px; font-size: 12.6px; }
.ok { width: 73px; height: 28px; margin: 12px 0 0 113px; padding-top: 0; }
```
